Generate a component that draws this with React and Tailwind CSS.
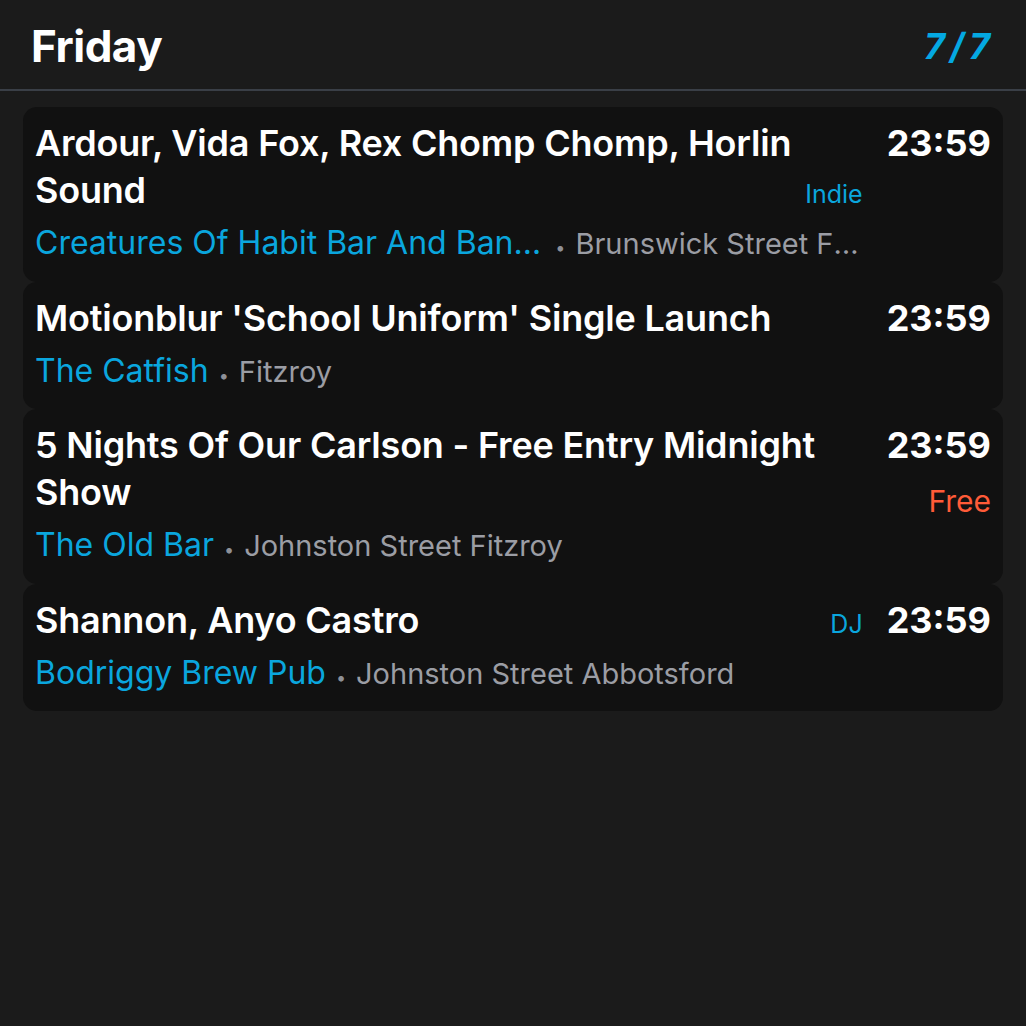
import React from "react";

const events = [
  {
    title: "Ardour, Vida Fox, Rex Chomp Chomp, Horlin Sound",
    tag: "Indie",
    venue: "Creatures Of Habit Bar And Band Room",
    location: "Brunswick Street Fitzroy",
    time: "23:59",
  },
  {
    title: "Motionblur 'School Uniform' Single Launch",
    venue: "The Catfish",
    location: "Fitzroy",
    time: "23:59",
  },
  {
    title: "5 Nights Of Our Carlson - Free Entry Midnight Show",
    venue: "The Old Bar",
    location: "Johnston Street Fitzroy",
    time: "23:59",
    price: "Free",
  },
  {
    title: "Shannon, Anyo Castro",
    tag: "DJ",
    venue: "Bodriggy Brew Pub",
    location: "Johnston Street Abbotsford",
    time: "23:59",
  },
];

function EventCard({ e }) {
  return (
    <div className="flex items-start gap-[24px] rounded-[14px] bg-[#111111] pl-[12px] pr-[12px] pt-[13px] pb-[18.5px]">
      <div className="flex min-w-0 flex-1 flex-col gap-[9px]">
        <div className="flex items-baseline-last justify-between gap-[8px]">
          <div className="min-w-0 flex-1 text-[36px] font-semibold leading-[47px] tracking-[-0.2px] text-white">
            {e.title}
          </div>
          {e.tag && (
            <div className="shrink-0 text-[25px] leading-[30px] text-[#0aa6de]">{e.tag}</div>
          )}
        </div>
        <div className="flex h-[40px] min-w-0 items-baseline whitespace-nowrap">
          <span className="min-w-0 truncate text-[32px] leading-[40px] text-[#0aa6de]">{e.venue}</span>
          <span className="mx-[10px] shrink-0 text-[18px] leading-none text-[#8e9097]">•</span>
          <span className="min-w-0 truncate text-[29px] leading-[36px] text-[#9b9da4]">{e.location}</span>
        </div>
      </div>
      <div className="flex shrink-0 flex-col items-end">
        <div className="text-[36px] font-bold leading-[47px] text-white">{e.time}</div>
        {e.price && (
          <div className="mt-[13px] text-[30px] leading-[38px] text-[#ff5b38]">{e.price}</div>
        )}
      </div>
    </div>
  );
}

export default function App() {
  return (
    <div
      className="min-h-[1026px] w-full bg-[#1b1b1b]"
      style={{ fontFamily: "Inter, 'Noto Sans', sans-serif" }}
    >
      <div className="flex h-[91px] items-center justify-between border-b-2 border-[#3a3f47] px-[31px] pt-[2px]">
        <div className="text-[44px] font-bold leading-none tracking-[-0.5px] text-white">Friday</div>
        <div className="text-[36px] font-bold italic leading-none tracking-[5px] text-[#04a8e2]">7/7</div>
      </div>
      <div className="flex flex-col px-[23px] pt-[16px]">
        {events.map((e, i) => (
          <EventCard key={i} e={e} />
        ))}
      </div>
    </div>
  );
}
